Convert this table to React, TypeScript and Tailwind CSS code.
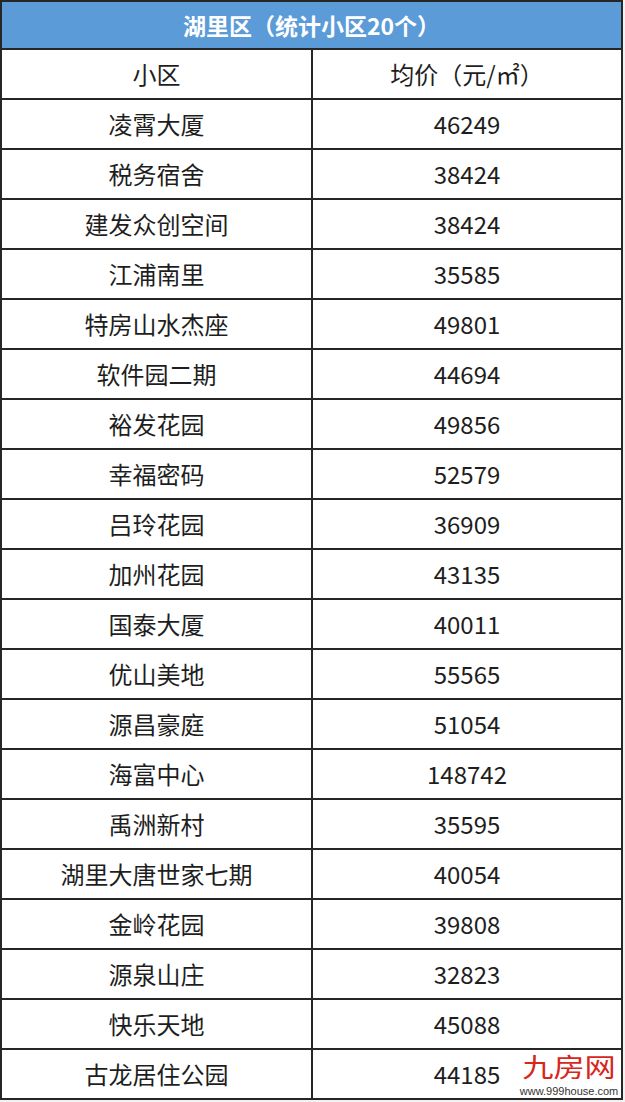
const rows: [string, string][] = [
  ["凌霄大厦", "46249"],
  ["税务宿舍", "38424"],
  ["建发众创空间", "38424"],
  ["江浦南里", "35585"],
  ["特房山水杰座", "49801"],
  ["软件园二期", "44694"],
  ["裕发花园", "49856"],
  ["幸福密码", "52579"],
  ["吕玲花园", "36909"],
  ["加州花园", "43135"],
  ["国泰大厦", "40011"],
  ["优山美地", "55565"],
  ["源昌豪庭", "51054"],
  ["海富中心", "148742"],
  ["禹洲新村", "35595"],
  ["湖里大唐世家七期", "40054"],
  ["金岭花园", "39808"],
  ["源泉山庄", "32823"],
  ["快乐天地", "45088"],
  ["古龙居住公园", "44185"],
];

const font = { fontFamily: '"Noto Sans CJK SC", "Noto Sans", sans-serif' };

const Row = ({ name, price }: { name: string; price: string }) => (
  <div className="grid grid-cols-[309px_2px_308px] h-[50px] border-b-2 border-[#262626] text-[24px] text-[#1e1e1e]">
    <div className="flex items-center justify-center">{name}</div>
    <div className="bg-[#262626]" />
    <div className="flex items-center justify-center">{price}</div>
  </div>
);

export default function App() {
  return (
    <div className="w-[625px] h-[1102px] bg-[#f2f2f2]" style={font}>
      <div className="relative w-[623px] bg-white border-l-2 border-r-2 border-t-2 border-[#262626]">
        {/* title */}
        <div className="h-[48px] bg-[#5b9bd8] border-b-2 border-[#262626] flex items-center justify-center text-white font-bold text-[23px]">
          湖里区（统计小区20个）
        </div>
        {/* column headers */}
        <Row name="小区" price="均价（元/㎡）" />
        {rows.map(([n, p]) => (
          <Row key={n} name={n} price={p} />
        ))}

        {/* watermark */}
        <div className="absolute right-[3px] bottom-[2px] w-[98px] flex flex-col items-center">
          <span className="block h-[38px] leading-[38px] text-[#d8261c] text-[26px] origin-center scale-x-[1.2]">
            九房网
          </span>
          <span
            className="block h-[13px] leading-[13px] text-[11px] text-[#333]"
            style={{ fontFamily: '"Liberation Sans", Arial, sans-serif' }}
          >
            www.999house.com
          </span>
        </div>
      </div>
    </div>
  );
}
